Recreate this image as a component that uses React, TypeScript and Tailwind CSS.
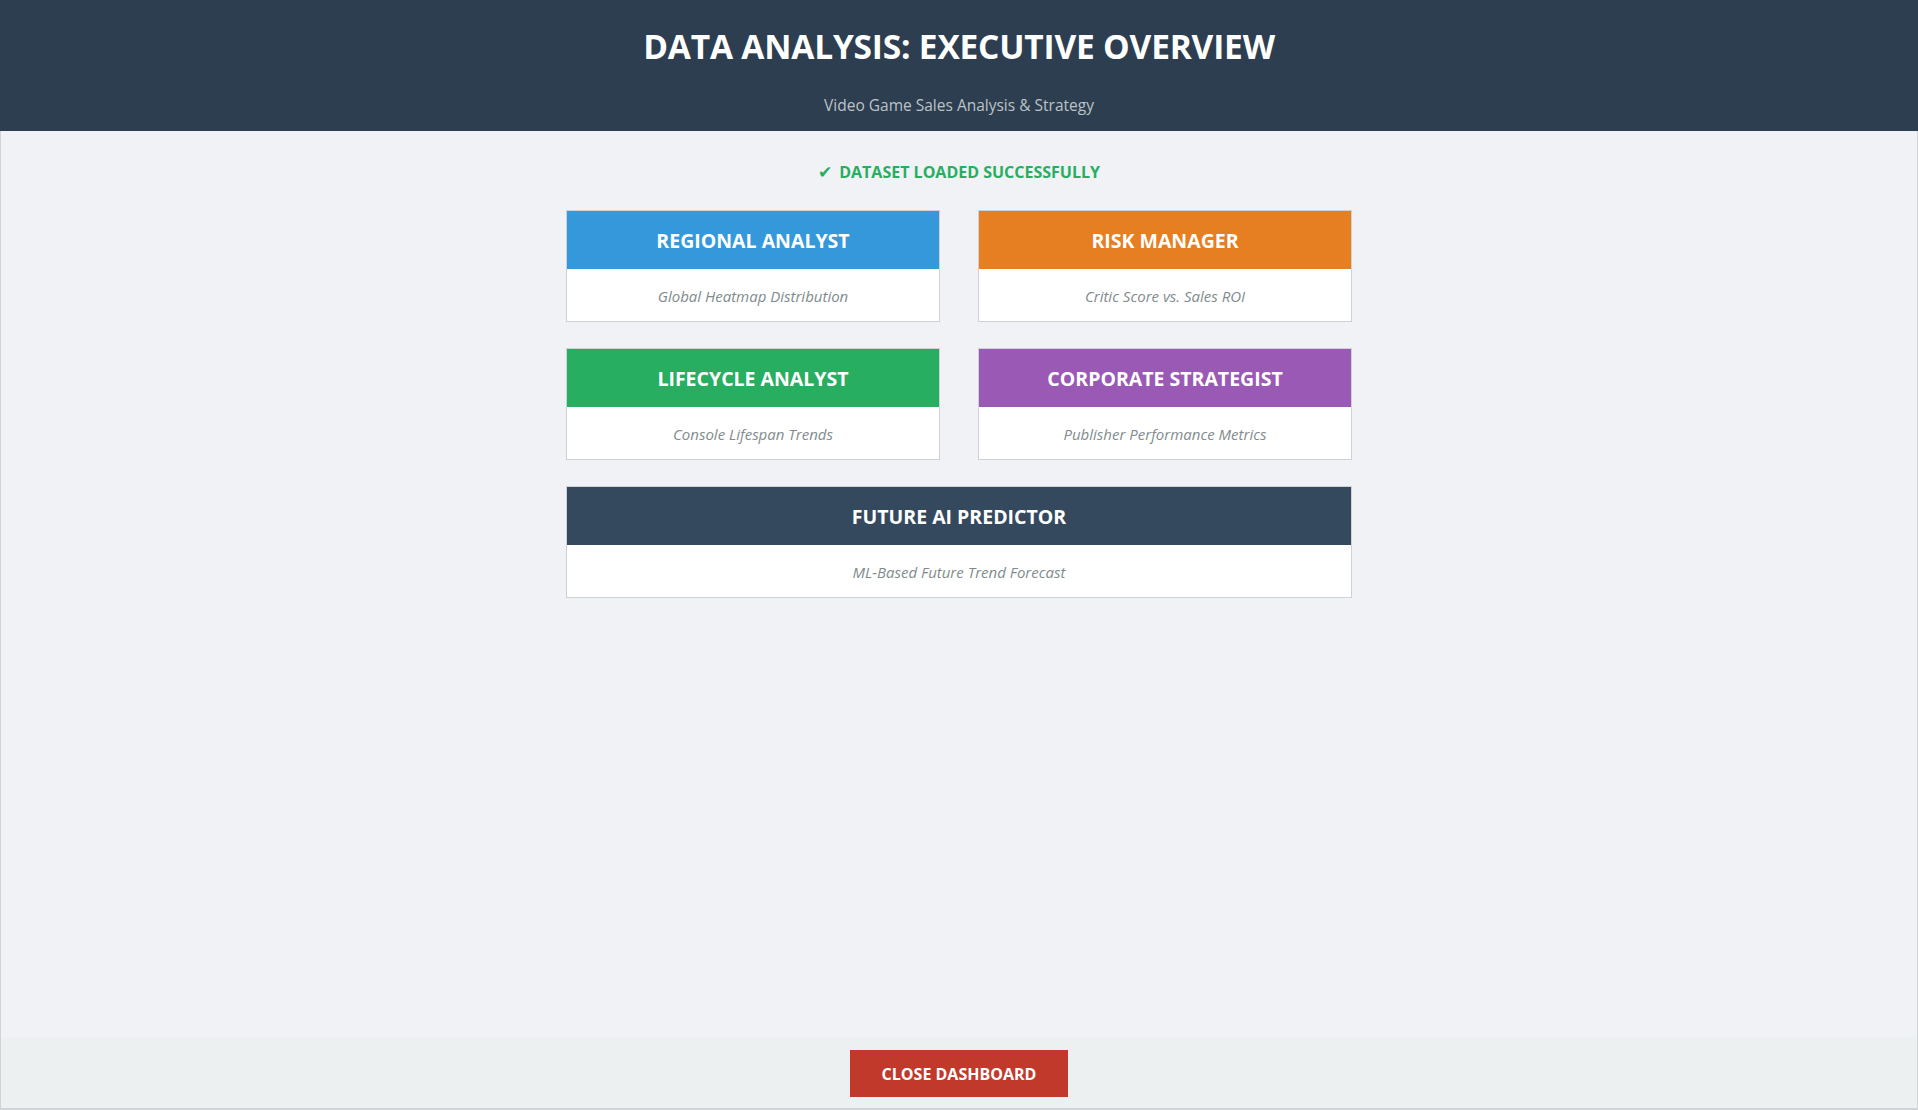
import React from "react";

const cards = [
  { title: "REGIONAL ANALYST", sub: "Global Heatmap Distribution", bg: "bg-[#3498db]" },
  { title: "RISK MANAGER", sub: "Critic Score vs. Sales ROI", bg: "bg-[#e67e22]" },
  { title: "LIFECYCLE ANALYST", sub: "Console Lifespan Trends", bg: "bg-[#27ae60]" },
  { title: "CORPORATE STRATEGIST", sub: "Publisher Performance Metrics", bg: "bg-[#9b59b6]" },
];

function Card({ title, sub, bg, wide }: { title: string; sub: string; bg: string; wide?: boolean }) {
  return (
    <div className={`border border-[#cdd2d7] bg-white flex flex-col ${wide ? "col-span-2" : ""}`}>
      <div className={`${bg} h-[58px] pt-[2px] flex items-center justify-center text-white font-bold text-[19.5px] leading-none`}>
        {title}
      </div>
      <div className="h-[52px] pt-[2px] flex items-center justify-center italic text-[#7f8c8d] text-[15px] leading-none">
        {sub}
      </div>
    </div>
  );
}

export default function App() {
  return (
    <div
      className="w-full h-screen flex flex-col overflow-hidden"
      style={{ fontFamily: '"Open Sans", "Noto Sans", sans-serif' }}
    >
      <header className="h-[131px] shrink-0 bg-[#2c3e50] flex flex-col items-center pt-[26px]">
        <h1 className="text-white font-bold text-[33.5px] leading-[40px] h-[40px] tracking-[-0.2px]">
          DATA ANALYSIS: EXECUTIVE OVERVIEW
        </h1>
        <p className="text-[#bdc3c7] text-[15.5px] leading-[20px] mt-[29px]">
          Video Game Sales Analysis &amp; Strategy
        </p>
      </header>
      <main className="flex-1 bg-[#f0f2f5] border-l border-r border-[#d0d4d8] flex flex-col items-center pt-[31px]">
        <div className="text-[#27ae60] font-bold text-[16px] leading-[20px] flex items-center gap-[7px]">
          <span style={{ fontFamily: '"DejaVu Sans", sans-serif' }} className="text-[17px] leading-none">✔</span>
          <span>DATASET LOADED SUCCESSFULLY</span>
        </div>
        <div className="mt-[28px] w-[786px] grid grid-cols-2 gap-x-[38px] gap-y-[26px]">
          {cards.map((c) => (
            <Card key={c.title} {...c} />
          ))}
          <Card title="FUTURE AI PREDICTOR" sub="ML-Based Future Trend Forecast" bg="bg-[#34495e]" wide />
        </div>
      </main>
      <footer className="h-[73px] shrink-0 bg-[#ecf0f1] border-l border-r border-b-2 border-[#d0d4d8] flex justify-center pt-[13px]">
        <button className="w-[218px] h-[47px] bg-[#c0392b] text-white font-bold text-[16px] leading-none">
          CLOSE DASHBOARD
        </button>
      </footer>
    </div>
  );
}
